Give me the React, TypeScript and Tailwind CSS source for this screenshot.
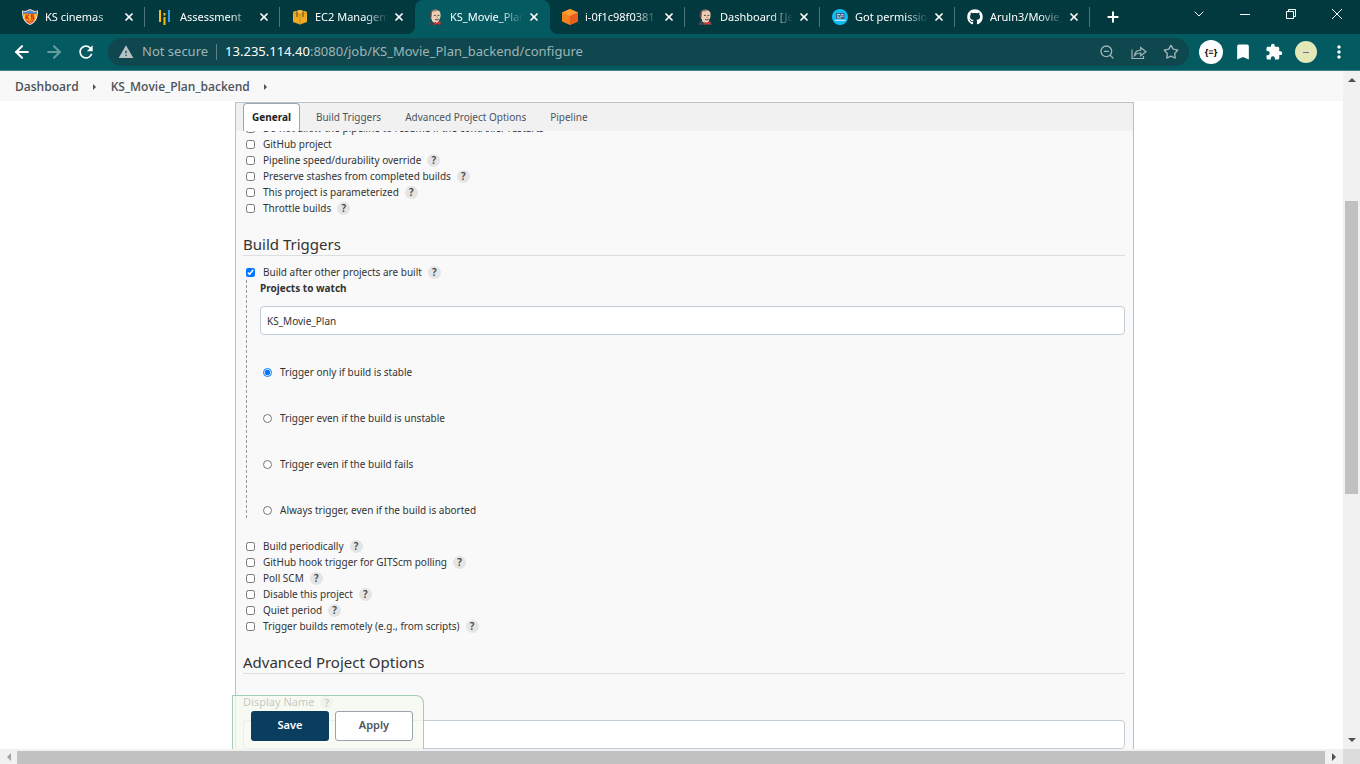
import React, { type ReactNode } from "react";
import { ArrowLeft, ArrowRight, Star, ZoomOut, X, Plus, ChevronDown } from "lucide-react";
import { FaGithub } from "react-icons/fa";
import { MdExtension, MdMoreVert, MdBookmark, MdWarning, MdRefresh } from "react-icons/md";

const JenkinsIcon = () => (
  <svg viewBox="0 0 16 16" className="size-4" aria-hidden="true">
    <path d="M1.500 16c0-2 1-3.500 3-4l6-1c2.500.5 4 2 4.500 5z" fill="#39474f" />
    <path d="M5 12l4 3 3-3-1-3H5.500z" fill="#ece7dc" />
    <path d="M3 6.500C2.700 3 5 .8 8.500.8S13.800 3 13.600 6.500c-.2 3.500-2 6-4.600 6S3.400 10 3 6.500z" fill="#eecdb2" />
    <path d="M3 9C1 4.500 3.500.3 8 .3c-2 .8-3.200 2-3.300 4.500L4.300 9z" fill="#4b4442" />
    <path d="M4 3C5.500.8 9 0 12 1.600L8 2.400z" fill="#a58d7c" />
    <path d="M7 6.400h1.800M10.500 6.400h1.800M8.200 10.400c1.200.7 2.500.5 3.500-.2" stroke="#3b302c" strokeWidth=".9" fill="none" />
    <path d="M9.800 7l.8 1.800H9.400" stroke="#a9806a" strokeWidth=".6" fill="none" />
    <path d="M7.500 12.600l2.800 1.200 3.200-1.400v3.400L10.300 14.800l-2.800 1.200z" fill="#d33833" />
  </svg>
);

const ShieldIcon = () => (
  <svg viewBox="0 0 16 16" className="size-4" aria-hidden="true">
    <path d="M0 1.500l3.500.5L8 0l4.500 2 3.500-.5C16 9 14 13.500 8 16 2 13.500 0 9 0 1.500z" fill="#f1ece6" />
    <path d="M1 2.600l3 .3L8 1.200l4 1.700 3-.3C14.700 9 13 12.700 8 15 3 12.700 1.300 9 1 2.600z" fill="#e23a1e" />
    <path d="M1 2.600l3 .3L8 1.200l4 1.700 3-.3-.1 2H1.100z" fill="#3f93d8" />
    <path d="M1.300 5h13.400c-.2 2.600-.8 4.600-2 6.500H3.300C2.100 9.600 1.500 7.600 1.300 5z" fill="#fbc21b" />
    <path d="M4 5.500v5M7 5.500L4.600 7.700 7 10.500M12 6H9.300v2h2.400v2H8.800" stroke="#d8321f" strokeWidth="1.300" fill="none" />
    <path d="M5.500 12.500h5L8 14z" fill="#f5a01a" />
  </svg>
);

const AssessmentIcon = () => (
  <svg viewBox="0 0 16 16" className="size-4" aria-hidden="true">
    <path d="M3 1v12M7.500 8v8" stroke="#f8bb15" strokeWidth="2" />
    <path d="M7.500 4v2.500" stroke="#f8bb15" strokeWidth="2" />
    <path d="M12 1v12" stroke="#2f9be0" strokeWidth="2" />
  </svg>
);

const Ec2Icon = () => (
  <svg viewBox="0 0 16 16" className="size-4" aria-hidden="true">
    <path d="M1 3L8 1l7 2v10l-7 2.500L1 13z" fill="#efab24" />
    <path d="M1 3L8 1l7 2-7 2z" fill="#f6bb45" />
    <path d="M1 3.500L8 5.500v10M15 3.500L8 5.500" stroke="#c98a17" strokeWidth=".8" fill="none" />
    <path d="M4.200 2.200v5.600l1.600.5V2.600zM11.800 2.200v5.600l-1.600.5V2.600z" fill="#8f6a1c" />
  </svg>
);

const InstanceIcon = () => (
  <svg viewBox="0 0 16 16" className="size-4" aria-hidden="true">
    <path d="M8 0l8 3.500v9L8 16l-8-3.500v-9z" fill="#f58220" />
    <path d="M0 3.500L8 0l8 3.500L8 7z" fill="#fb9c35" />
    <path d="M8 7l8-3.500v9L8 16z" fill="#ea5d1d" />
  </svg>
);

const ForumIcon = () => (
  <svg viewBox="0 0 16 16" className="size-4" aria-hidden="true">
    <circle cx="8" cy="8" r="8" fill="#0dbdf2" />
    <path d="M4 4h8.500v6H4z" fill="#3c5f86" />
    <path d="M5 5.500h3M9 5.500h2.500M5 7.200h2M8 7.200h3.500M5 8.900h4" stroke="#d6edf7" strokeWidth=".8" />
    <path d="M3 11.300h10.500" stroke="#cfeefa" strokeWidth="1.200" />
  </svg>
);

type Tab = { title: string; icon: ReactNode; active?: boolean; divider?: boolean };

const browserTabs: Tab[] = [
  { title: "KS cinemas", icon: <ShieldIcon />, divider: true },
  { title: "Assessment", icon: <AssessmentIcon />, divider: true },
  { title: "EC2 Management", icon: <Ec2Icon /> },
  { title: "KS_Movie_Plan_backend", icon: <JenkinsIcon />, active: true },
  { title: "i-0f1c98f0381", icon: <InstanceIcon />, divider: true },
  { title: "Dashboard [Jenkins]", icon: <JenkinsIcon />, divider: true },
  { title: "Got permission", icon: <ForumIcon />, divider: true },
  { title: "Aruln3/Movie_Plan", icon: <FaGithub className="size-4" />, divider: true },
];

function BrowserTab({ title, icon, active, divider }: Tab) {
  return (
    <div className={`relative flex h-full w-[135px] min-w-0 items-center pl-3 ${active ? "rounded-t-lg bg-[#045a61]" : ""}`}>
      {active && (
        <>
          <span className="absolute -left-2 bottom-0 size-2 bg-[radial-gradient(circle_at_0_0,transparent_8px,#045a61_8px)]" />
          <span className="absolute -right-2 bottom-0 size-2 bg-[radial-gradient(circle_at_100%_0,transparent_8px,#045a61_8px)]" />
        </>
      )}
      <span className="shrink-0">{icon}</span>
      <span className="ml-[7px] w-[73px] shrink-0 overflow-hidden whitespace-nowrap text-white [mask-image:linear-gradient(to_right,black_50px,transparent_73px)]">
        {title}
      </span>
      <button aria-label={`Close ${title}`} className="ml-[3px] flex size-4 shrink-0 items-center justify-center">
        <X className="size-3" strokeWidth={3.5} />
      </button>
      <span className={`ml-auto h-5 w-px shrink-0 ${divider ? "bg-[#4c757a]" : ""}`} />
    </div>
  );
}

function Browser() {
  return (
    <header className="shrink-0 text-[11px] text-white">
      <div className="flex h-[34px] bg-[#02393f] pl-[10px]">
        {browserTabs.map((t) => <BrowserTab key={t.title} {...t} />)}
        <button aria-label="New tab" className="flex w-[45px] items-center justify-center">
          <Plus className="size-4" strokeWidth={3} />
        </button>
        <div className="ml-auto flex h-7">
          <button aria-label="Search tabs" className="flex w-[46px] items-center justify-center"><ChevronDown className="size-4" strokeWidth={1.5} /></button>
          <button aria-label="Minimize" className="flex w-[46px] items-center justify-center"><svg viewBox="0 0 10 10" className="size-[10px]"><path d="M0 5.500h10" stroke="white" /></svg></button>
          <button aria-label="Restore" className="flex w-[46px] items-center justify-center"><svg viewBox="0 0 10 10" className="size-[10px]" fill="none" stroke="white"><path d="M.5 2.500h7v7h-7zM2.500 2.500v-2h7v7h-2" /></svg></button>
          <button aria-label="Close window" className="flex w-[46px] items-center justify-center"><svg viewBox="0 0 10 10" className="size-[10px]" stroke="white"><path d="M0 0l10 10M10 0L0 10" /></svg></button>
        </div>
      </div>
      <div className="flex h-[37px] items-center border-b border-[#3d838a] bg-[#045a61] pl-3 pr-[11px]">
        <button aria-label="Back" className="mr-3"><ArrowLeft className="size-5" strokeWidth={2.5} /></button>
        <button aria-label="Forward" className="mr-3 text-[#659da1]"><ArrowRight className="size-5" strokeWidth={2.5} /></button>
        <button aria-label="Reload" className="mr-3"><MdRefresh className="size-5" /></button>
        <div className="flex h-7 min-w-0 flex-1 items-center rounded-full bg-[#0f474e] px-[10px] text-[13px] text-[#9fb5b8]">
          <MdWarning className="size-4 shrink-0 text-[#b7c0c2]" />
          <span className="ml-2 whitespace-nowrap">Not secure</span>
          <span className="mx-2 h-4 w-px bg-[#5b8085]" />
          <div className="flex-1 truncate"><span className="text-white">13.235.114.40</span>:8080/job/KS_Movie_Plan_backend/configure</div>
          <button aria-label="Zoom"><ZoomOut className="size-4" /></button>
          <button aria-label="Share" className="ml-4">
            <svg viewBox="0 0 16 16" className="size-4" fill="none" stroke="currentColor" strokeWidth="1.2"><path d="M1 5.500v9h11.500V12M3.500 11.500c.5-3.500 3-5.200 6.200-5.300V3.500L15 7.700l-5.300 4V9c-2.700 0-4.700.7-6.200 2.500z" /></svg>
          </button>
          <button aria-label="Bookmark" className="ml-4"><Star className="size-4" /></button>
        </div>
        <button aria-label="JSON viewer" className="ml-[10px] flex size-6 items-center justify-center rounded-full bg-white text-[9px] font-bold text-black">{"{≡}"}</button>
        <button aria-label="Reading list" className="ml-[10px]"><MdBookmark className="size-5" /></button>
        <button aria-label="Extensions" className="ml-3"><MdExtension className="size-[18px]" /></button>
        <button aria-label="Profile" className="ml-3 flex size-[22px] items-center justify-center rounded-full bg-[#e2e8b8]"><span className="h-px w-[6px] bg-[#6a6aa0]" /></button>
        <button aria-label="Menu" className="ml-3"><MdMoreVert className="size-5" /></button>
      </div>
    </header>
  );
}

function Help() {
  return (
    <button aria-label="Help" className="ml-[6px] flex size-[13px] items-center justify-center rounded-full bg-[#e4e4e4] font-semibold leading-none text-[#444]">?</button>
  );
}

function Check({ id, label, help = true, checked = false }: { id: string; label: string; help?: boolean; checked?: boolean }) {
  return (
    <div className="flex h-4 items-center pl-[3px]">
      <input id={id} type="checkbox" defaultChecked={checked} className="size-[9px]" />
      <label htmlFor={id} className="pl-2">{label}</label>
      {help && <Help />}
    </div>
  );
}

function Heading({ children }: { children: ReactNode }) {
  return <h2 className="mt-[18px] h-[22px] border-b border-[#dcdfe1] text-[15px] leading-5">{children}</h2>;
}

const triggers = [
  "Trigger only if build is stable",
  "Trigger even if the build is unstable",
  "Trigger even if the build fails",
  "Always trigger, even if the build is aborted",
];

const Arrow = ({ d }: { d: string }) => (
  <svg viewBox="0 0 8 8" className="size-2" aria-hidden="true"><path d={d} fill="#505050" /></svg>
);

export default function App() {
  return (
    <div className="flex h-screen flex-col overflow-hidden bg-white font-['Noto_Sans','Open_Sans',sans-serif]">
      <Browser />
      <div className="flex min-h-0 flex-1">
        <div className="relative flex min-w-0 flex-1 flex-col text-[10px] text-[#333]">
          <nav className="flex h-[30px] shrink-0 items-center bg-[#f8f8f8] pl-[15px] pt-px font-['Open_Sans',sans-serif] text-xs font-semibold text-[#4d545d]">
            <a href="#dashboard">Dashboard</a>
            <span className="mx-3"><Arrow d="M2 1l3 3-3 3z" /></span>
            <a href="#job">KS_Movie_Plan_backend</a>
            <span className="ml-3"><Arrow d="M2 1l3 3-3 3z" /></span>
          </nav>
          <main className="ml-[235px] mr-[209px] mt-px flex min-h-0 flex-1 flex-col border-x border-t border-[#b9c2c6] bg-[#f9f9f9]">
            <div className="flex h-7 shrink-0 items-stretch bg-[#f1f1f1] pl-[7px] text-[#4d545d]">
              <a href="#general" className="flex items-center rounded-t border border-b-0 border-[#9aa8b2] bg-white px-2 font-bold text-[#222]">General</a>
              <a href="#triggers" className="ml-4 flex items-center">Build Triggers</a>
              <a href="#advanced" className="ml-6 flex items-center">Advanced Project Options</a>
              <a href="#pipeline" className="ml-6 flex items-center">Pipeline</a>
            </div>
            <form className="min-h-0 flex-1 overflow-hidden pl-[7px] pr-2" onSubmit={(e) => e.preventDefault()}>
              <div className="-mt-[11px]">
                <Check id="resume" label="Do not allow the pipeline to resume if the controller restarts" help={false} />
                <Check id="github" label="GitHub project" help={false} />
                <Check id="speed" label="Pipeline speed/durability override" />
                <Check id="stash" label="Preserve stashes from completed builds" />
                <Check id="param" label="This project is parameterized" />
                <Check id="throttle" label="Throttle builds" />
              </div>
              <Heading>Build Triggers</Heading>
              <div className="mt-2">
                <Check id="after" label="Build after other projects are built" checked />
                <div className="ml-[3px] h-[238px] border-l border-dashed border-[#999] pl-[13px]">
                  <label htmlFor="watch" className="block h-4 font-bold leading-4">Projects to watch</label>
                  <input id="watch" defaultValue="KS_Movie_Plan" className="mt-[10px] block h-[29px] w-full rounded border border-[#c3cdd6] bg-white px-[6px]" />
                  <div className="mt-[14px]">
                    {triggers.map((t, i) => (
                      <label key={t} className="flex h-[46px] items-center gap-2 pl-[3px]">
                        <input type="radio" name="threshold" defaultChecked={i === 0} className="size-[9px]" />
                        {t}
                      </label>
                    ))}
                  </div>
                </div>
              </div>
              <div className="mt-5">
                <Check id="periodic" label="Build periodically" />
                <Check id="hook" label="GitHub hook trigger for GITScm polling" />
                <Check id="poll" label="Poll SCM" />
                <Check id="disable" label="Disable this project" />
                <Check id="quiet" label="Quiet period" />
                <Check id="remote" label="Trigger builds remotely (e.g., from scripts)" />
              </div>
              <Heading>Advanced Project Options</Heading>
              <div className="mt-5 flex h-4 items-center text-[11px]">
                <label htmlFor="display">Display Name</label>
                <Help />
              </div>
              <input id="display" className="mt-[10px] block h-[29px] w-full rounded border border-[#c3cdd6] bg-white px-[6px]" />
            </form>
          </main>
          <div className="absolute bottom-0 left-[232px] flex h-[54px] w-[192px] gap-[6px] rounded-tr-lg border border-b-0 border-[#a3cdb4] bg-[#f6faf0]/75 pl-[18px] pt-[15px] text-[11px]">
            <button className="h-[30px] w-[78px] rounded-[3px] bg-[#0b3d5f] pb-px font-semibold text-white">Save</button>
            <button className="h-[30px] w-[78px] rounded-[3px] border border-[#9aa2ab] bg-white pb-px font-semibold text-[#4d545d]">Apply</button>
          </div>
        </div>
        <div className="flex w-[17px] flex-col items-center bg-[#f1f1f1] py-[5px]" aria-hidden="true">
          <Arrow d="M0 6l4-4 4 4z" />
          <div className="mt-[117px] h-[293px] w-[13px] bg-[#c1c1c1]" />
          <div className="mt-auto"><Arrow d="M0 2l4 4 4-4z" /></div>
        </div>
      </div>
      <div className="flex h-[15px] shrink-0 bg-[#f1f1f1]" aria-hidden="true">
        <div className="flex w-[17px] items-center justify-center"><svg viewBox="0 0 8 8" className="size-2"><path d="M6 0L2 4l4 4z" fill="#a3a3a3" /></svg></div>
        <div className="mt-[2px] flex-1 bg-[#c1c1c1]" />
        <div className="flex w-[18px] items-center justify-center"><Arrow d="M2 0l4 4-4 4z" /></div>
        <div className="w-[17px] bg-[#dcdcdc]" />
      </div>
    </div>
  );
}
